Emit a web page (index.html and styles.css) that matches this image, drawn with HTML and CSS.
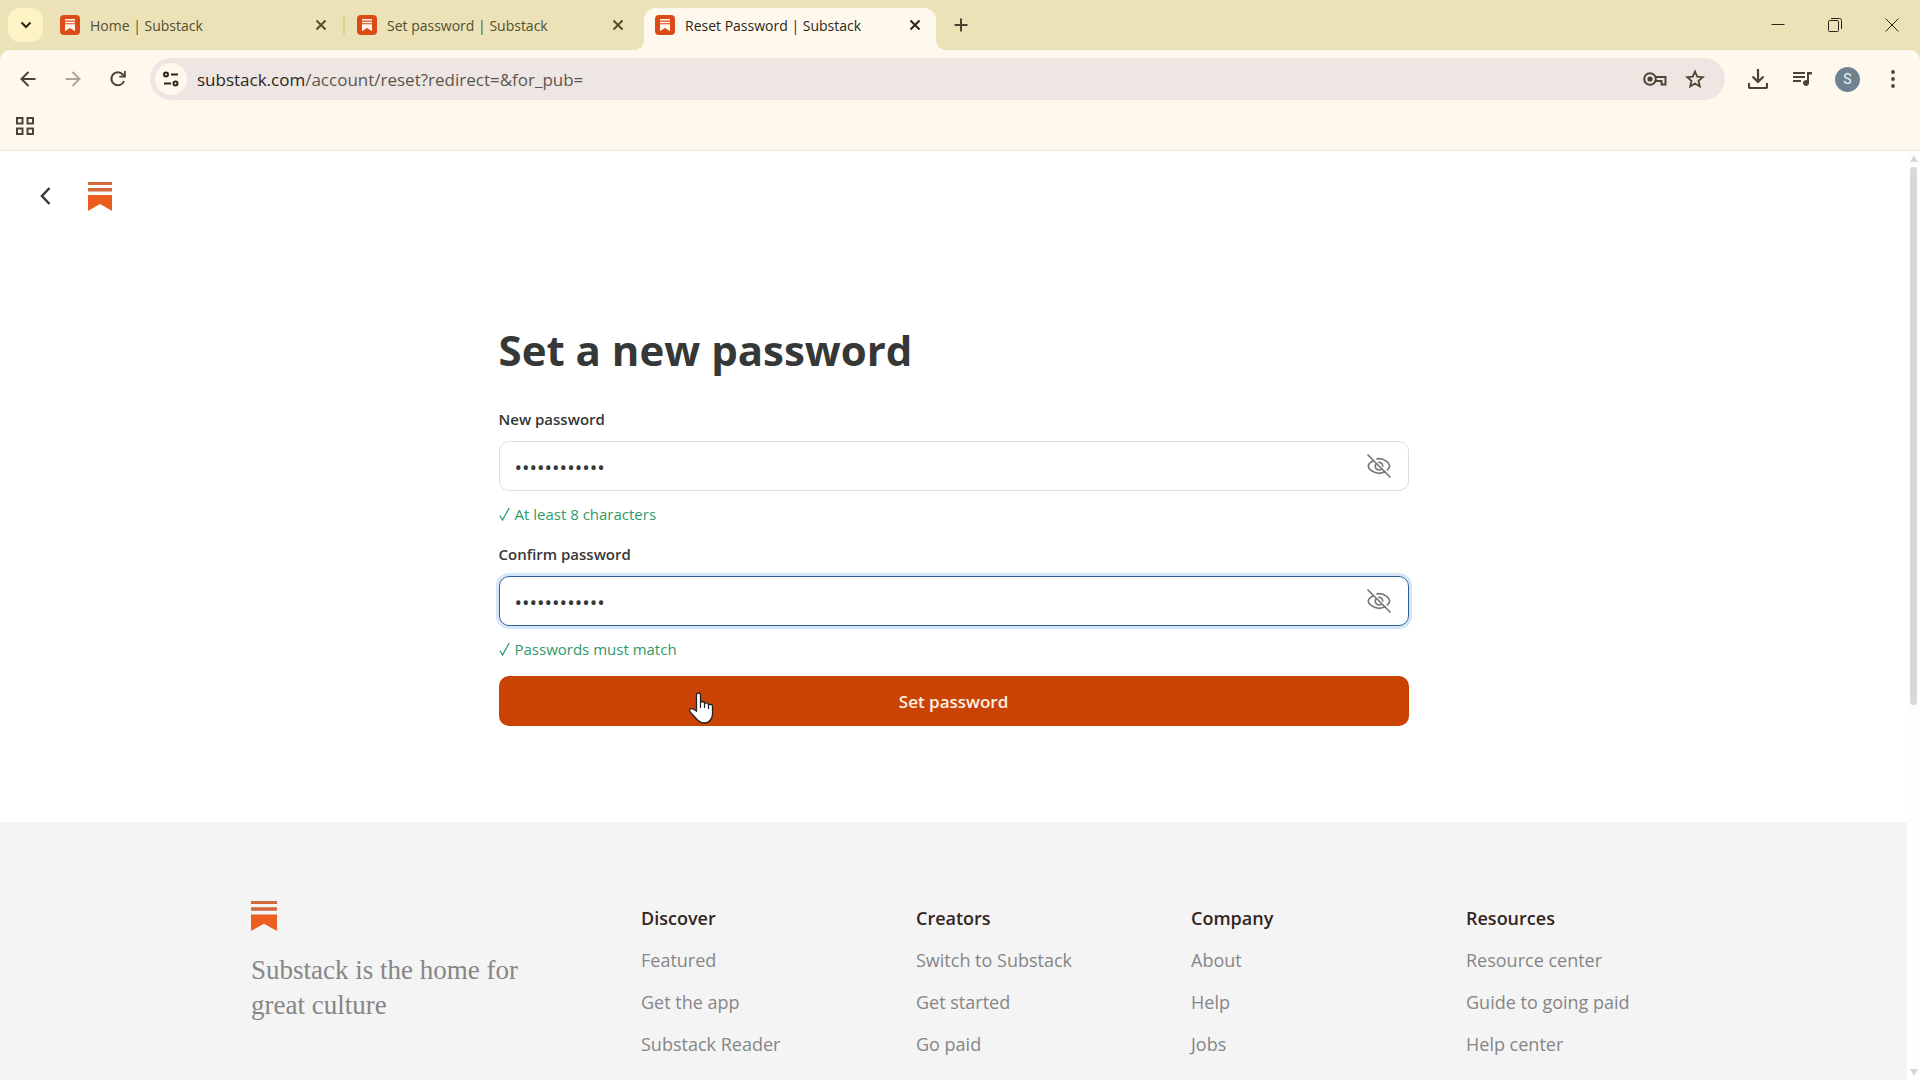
FILE: index.html
```html
<!DOCTYPE html>
<html lang="en">
<head>
    <meta charset="UTF-8">
    <meta name="viewport" content="width=device-width, initial-scale=1.0">
    <title>Reset Password | Substack</title>
    <link rel="stylesheet" href="styles.css">
</head>
<body>

<!-- shared icon shapes -->
<svg class="sprite" aria-hidden="true">
    <symbol id="favicon" viewBox="0 0 20 20">
        <rect width="20" height="20" rx="4" fill="#db4a17"/>
        <path d="M5 4h10v1.500H5zM5 6.700h10v1.500H5zM5 9.300h10v7l-5-3.200-5 3.200z" fill="#fff3ea"/>
    </symbol>
    <symbol id="close" viewBox="0 0 12 12">
        <path d="M1.500 1.500l9 9M10.500 1.500l-9 9" fill="none" stroke="currentColor" stroke-width="2"/>
    </symbol>
    <symbol id="logo" viewBox="0 0 24 29" preserveAspectRatio="none">
        <path d="M0 0h24v3H0zM0 6h24v3.500H0z" fill="#d2693b"/>
        <path d="M0 13h24v16l-12-7-12 7z" fill="#ec5d20"/>
    </symbol>
    <symbol id="eye-off" viewBox="0 0 24 24">
        <path d="M6.200 6.800C3.300 8.400 1.300 10.700 1.300 12c0 2.700 4.800 7.300 10.700 7.300 2.400 0 4.500-.7 6.200-1.700M10 4.900c.7-.1 1.300-.2 2-.2 5.900 0 10.700 4.600 10.700 7.300 0 1-.9 2.500-2.300 3.900M9.300 9.700a3.700 3.700 0 1 0 5.300 5.200M12 8.300a3.700 3.700 0 0 1 3.700 3.700M1 1l22 22" fill="none" stroke="currentColor" stroke-width="1.700" stroke-linecap="round"/>
    </symbol>
</svg>

<header class="browser">
    <div class="tab-bar">
        <button class="tab-search" aria-label="Search tabs">
            <svg width="12" height="8" viewBox="0 0 12 8"><path d="M1.500 1.500L6 6l4.500-4.500" fill="none" stroke="currentColor" stroke-width="2"/></svg>
        </button>
        <div class="tab">
            <svg width="20" height="20"><use href="#favicon"/></svg>
            <span>Home | Substack</span>
            <button class="tab-close" aria-label="Close tab"><svg width="12" height="12"><use href="#close"/></svg></button>
        </div>
        <div class="tab divided">
            <svg width="20" height="20"><use href="#favicon"/></svg>
            <span>Set password | Substack</span>
            <button class="tab-close" aria-label="Close tab"><svg width="12" height="12"><use href="#close"/></svg></button>
        </div>
        <div class="tab active">
            <svg width="20" height="20"><use href="#favicon"/></svg>
            <span>Reset Password | Substack</span>
            <button class="tab-close" aria-label="Close tab"><svg width="12" height="12"><use href="#close"/></svg></button>
        </div>
        <button class="new-tab" aria-label="New tab">
            <svg width="14" height="14" viewBox="0 0 14 14"><path d="M7 .5v13M.5 7h13" fill="none" stroke="currentColor" stroke-width="2"/></svg>
        </button>
        <div class="window-controls">
            <button aria-label="Minimize"><svg width="14" height="14" viewBox="0 0 14 14"><path d="M.5 6.500h13" stroke="currentColor"/></svg></button>
            <button aria-label="Restore"><svg width="14" height="14" viewBox="0 0 14 14"><path d="M.5 3.500q0-1 1-1h8q1 0 1 1v9q0 1-1 1h-8q-1 0-1-1zM3 .5h8.500q2 0 2 2V11" fill="none" stroke="currentColor"/></svg></button>
            <button aria-label="Close"><svg width="14" height="14" viewBox="0 0 14 14"><path d="M.5 .5l13 13M13.500 .5l-13 13" stroke="currentColor"/></svg></button>
        </div>
    </div>

    <div class="toolbar">
        <div class="nav-buttons">
            <button aria-label="Back"><svg width="16" height="16" viewBox="0 0 16 16"><path d="M15.500 8H2M8.500 1L1.500 8l7 7" fill="none" stroke="currentColor" stroke-width="2"/></svg></button>
            <button class="off" aria-label="Forward"><svg width="16" height="16" viewBox="0 0 16 16"><path d="M.5 8H14M7.500 1l7 7-7 7" fill="none" stroke="currentColor" stroke-width="2"/></svg></button>
            <button aria-label="Reload"><svg width="18" height="18" viewBox="0 0 18 18"><path d="M15 11a6.500 6.500 0 1 1-1.200-6.500L16 6.500" fill="none" stroke="currentColor" stroke-width="2"/><path d="M16.800 1v6.500h-6.500V5.700H15V1z" fill="currentColor"/></svg></button>
        </div>
        <div class="address-bar">
            <button class="site-info" aria-label="Site information">
                <svg width="16" height="16" viewBox="0 0 16 16"><path d="M8 3.500h7M1 12.500h7" stroke="currentColor" stroke-width="2"/><circle cx="3" cy="3.500" r="2" fill="none" stroke="currentColor" stroke-width="2"/><circle cx="12.500" cy="12.500" r="2" fill="none" stroke="currentColor" stroke-width="2"/></svg>
            </button>
            <p class="url">substack.com<span>/account/reset?redirect=&amp;for_pub=</span></p>
            <button aria-label="Passwords"><svg width="24" height="14" viewBox="0 0 24 14"><circle cx="7" cy="7" r="5.800" fill="none" stroke="currentColor" stroke-width="2"/><circle cx="7" cy="7" r="2.600" fill="currentColor"/><path d="M12.500 5H22.500v7.500h-4V9h-6" fill="none" stroke="currentColor" stroke-width="2"/></svg></button>
            <button aria-label="Bookmark this tab"><svg width="20" height="20" viewBox="0 0 20 20"><path d="M10 2.500l2.200 5.200 5.600.5-4.300 3.700 1.300 5.500-4.800-2.900-4.800 2.900 1.300-5.500-4.300-3.700 5.600-.5z" fill="none" stroke="currentColor" stroke-width="1.800"/></svg></button>
        </div>
        <div class="tool-buttons">
            <button aria-label="Downloads"><svg width="20" height="20" viewBox="0 0 20 20"><path d="M10 0v12.500M4.500 7.500L10 13l5.500-5.500M1 14v3.500q0 1.500 1.500 1.500h15q1.500 0 1.500-1.500V14" fill="none" stroke="currentColor" stroke-width="2.200"/></svg></button>
            <button aria-label="Media controls"><svg width="20" height="16" viewBox="0 0 20 16"><path d="M0 2h12M0 6h12M0 10h8" stroke="currentColor" stroke-width="2"/><path d="M14 1h5v2.500h-3V12a3 3 0 1 1-2-2.800z" fill="currentColor"/></svg></button>
            <button class="avatar" aria-label="Profile">S</button>
            <button aria-label="Menu"><svg width="4" height="18" viewBox="0 0 4 18"><circle cx="2" cy="2" r="1.900"/><circle cx="2" cy="9" r="1.900"/><circle cx="2" cy="16" r="1.900"/></svg></button>
        </div>
    </div>

    <div class="bookmarks">
        <button aria-label="Apps"><svg width="18" height="18" viewBox="0 0 18 18"><path d="M1 1h5.500v5.500H1zM11.500 1H17v5.500h-5.500zM1 11.500h5.500V17H1zM11.500 11.500H17V17h-5.500z" fill="none" stroke="currentColor" stroke-width="2"/></svg></button>
    </div>
</header>

<div class="viewport">
    <div class="page">
        <nav class="page-nav">
            <button aria-label="Go back"><svg width="12" height="18" viewBox="0 0 12 18"><path d="M9.500 1L2 9l7.500 8" fill="none" stroke="currentColor" stroke-width="2.500"/></svg></button>
            <a href="#" aria-label="Substack home"><svg width="24" height="29"><use href="#logo"/></svg></a>
        </nav>

        <main>
            <form class="reset-form">
                <h1>Set a new password</h1>

                <div class="field">
                    <label for="password">New password</label>
                    <div class="input-box">
                        <input type="password" id="password" value="substack1234">
                        <button type="button" aria-label="Show password"><svg width="24" height="24"><use href="#eye-off"/></svg></button>
                    </div>
                    <p class="hint"><svg width="11" height="14" viewBox="0 0 11 14"><path d="M.8 8.500L3.500 13 10.200 1" fill="none" stroke="currentColor" stroke-width="1.300"/></svg>At least 8 characters</p>
                </div>

                <div class="field">
                    <label for="confirm">Confirm password</label>
                    <div class="input-box focused">
                        <input type="password" id="confirm" value="substack1234">
                        <button type="button" aria-label="Show password"><svg width="24" height="24"><use href="#eye-off"/></svg></button>
                    </div>
                    <p class="hint"><svg width="11" height="14" viewBox="0 0 11 14"><path d="M.8 8.500L3.500 13 10.200 1" fill="none" stroke="currentColor" stroke-width="1.300"/></svg>Passwords must match</p>
                </div>

                <div class="submit-row">
                    <button type="submit" class="submit">Set password</button>
                    <svg class="pointer" width="26" height="32" viewBox="0 0 26 32"><path d="M8.500 19V3q0-2 2-2t2 2v8q.3-1.500 2-1.500T16.500 11v1q.3-1.200 2-1.200t2 1.700v.8q.3-1 2-1t2 1.900V22q0 4-2.500 6.500-2 2.500-5.500 2.500-4 0-7-3l-6-6.500q-3-3.500-1.500-4.500t4 .5z" fill="#fff" stroke="#222" stroke-width="1.300"/><path d="M12.500 11v5M16.500 12v4M20.500 13v4" stroke="#222" stroke-width="1.200"/></svg>
                </div>
            </form>
        </main>

        <footer>
            <div class="footer-grid">
                <div class="brand">
                    <svg width="26" height="30"><use href="#logo"/></svg>
                    <p>Substack is the home for great culture</p>
                </div>
                <div class="links">
                    <h2>Discover</h2>
                    <a href="#">Featured</a>
                    <a href="#">Get the app</a>
                    <a href="#">Substack Reader</a>
                </div>
                <div class="links">
                    <h2>Creators</h2>
                    <a href="#">Switch to Substack</a>
                    <a href="#">Get started</a>
                    <a href="#">Go paid</a>
                </div>
                <div class="links">
                    <h2>Company</h2>
                    <a href="#">About</a>
                    <a href="#">Help</a>
                    <a href="#">Jobs</a>
                </div>
                <div class="links">
                    <h2>Resources</h2>
                    <a href="#">Resource center</a>
                    <a href="#">Guide to going paid</a>
                    <a href="#">Help center</a>
                </div>
            </div>
        </footer>
    </div>

    <div class="scrollbar">
        <svg width="8" height="7" viewBox="0 0 8 7"><path d="M4 0l4 7H0z" fill="#d6d6d6"/></svg>
        <div class="track"><div class="thumb"></div></div>
        <svg width="8" height="7" viewBox="0 0 8 7"><path d="M4 7L0 0h8z" fill="#d6d6d6"/></svg>
    </div>
</div>

</body>
</html>
```
FILE: styles.css
```css
* {
    box-sizing: border-box;
}
body {
    margin: 0;
    height: 100vh;
    display: flex;
    flex-direction: column;
    overflow: hidden;
    font-family: "Open Sans", "Noto Sans", sans-serif;
    color: #363737;
    background: #fff;
}
h1, h2, p {
    margin: 0;
}
button {
    display: flex;
    align-items: center;
    justify-content: center;
    padding: 0;
    border: none;
    background: none;
    color: inherit;
    font-family: inherit;
    cursor: pointer;
}
svg {
    display: block;
    flex-shrink: 0;
}
.sprite {
    position: absolute;
    width: 0;
    height: 0;
}

/* browser chrome */
.browser {
    background: #ebe2b8;
    color: #4a4532;
}
.tab-bar {
    display: flex;
    height: 50px;
    padding: 8px 0 0 8px;
}
.tab-search {
    width: 35px;
    height: 34px;
    margin-right: 7px;
    border-radius: 12px;
    background: #fdf3c4;
    color: #2b2614;
}
.tab {
    display: flex;
    align-items: center;
    gap: 10px;
    width: 297px;
    height: 34px;
    padding: 0 16px 0 10px;
    font-size: 14px;
    color: #544e30;
}
.tab span {
    flex: 1;
}
.tab-close {
    width: 20px;
    height: 20px;
}
.divided {
    position: relative;
}
.divided::before {
    content: "";
    position: absolute;
    left: -4px;
    top: 8px;
    width: 2px;
    height: 18px;
    background: #dcd284;
}
.active {
    position: relative;
    width: 292px;
    height: 42px;
    padding: 0 11px 8px 11px;
    border-radius: 12px 12px 0 0;
    background: #fff8ec;
    color: #2a2618;
}
.active::before, .active::after {
    content: "";
    position: absolute;
    bottom: 0;
    width: 10px;
    height: 10px;
}
.active::before {
    right: 100%;
    background: radial-gradient(circle at top left, transparent 10px, #fff8ec 10px);
}
.active::after {
    left: 100%;
    background: radial-gradient(circle at top right, transparent 10px, #fff8ec 10px);
}
.new-tab {
    width: 34px;
    height: 34px;
    margin-left: 8px;
}
.window-controls {
    display: flex;
    margin-left: auto;
    color: #2a2618;
}
.window-controls button {
    width: 57px;
    height: 34px;
}
.toolbar {
    display: flex;
    align-items: center;
    height: 58px;
    padding: 0 15px 0 5px;
    border-radius: 10px 10px 0 0;
    background: #fff8ec;
}
.nav-buttons {
    display: flex;
    margin-right: 10px;
}
.nav-buttons button {
    width: 45px;
    height: 34px;
}
.off {
    opacity: 0.45;
}
.address-bar {
    flex: 1;
    display: flex;
    align-items: center;
    height: 42px;
    padding: 0 10px 0 5px;
    border-radius: 21px;
    background: #eee6e3;
}
.address-bar button {
    width: 40px;
    height: 32px;
}
.address-bar .site-info {
    width: 32px;
    border-radius: 50%;
    background: #fff8ec;
    color: #2a2618;
}
.url {
    flex: 1;
    padding-left: 10px;
    font-size: 17px;
    color: #2a2522;
}
.url span {
    color: #5c5650;
}
.tool-buttons {
    display: flex;
    align-items: center;
    gap: 20px;
    margin-left: 20px;
    fill: currentColor;
}
.tool-buttons button {
    width: 25px;
    height: 25px;
}
.tool-buttons .avatar {
    border-radius: 50%;
    background: #70828f;
    color: #eef4f8;
    font: 14px Roboto, sans-serif;
}
.bookmarks {
    height: 43px;
    padding: 9px 16px;
    border-bottom: 1px solid #ece5da;
    background: #fff8ec;
}

/* page */
.viewport {
    flex: 1;
    display: flex;
    min-height: 0;
}
.page {
    flex: 1;
    overflow: hidden;
    background: #f4f4f4;
}
.page-nav {
    display: flex;
    align-items: center;
    gap: 24px;
    height: 90px;
    padding: 0 28px;
    background: #fff;
}
.page-nav button {
    width: 36px;
    height: 36px;
}
main {
    padding: 79px 20px 96px;
    background: #fff;
}
.reset-form {
    max-width: 910px;
    margin: 0 auto;
}
h1 {
    margin-bottom: 29px;
    font-size: 42px;
    line-height: 60px;
    font-weight: 700;
}
.field label {
    display: block;
    margin-bottom: 12px;
    font-size: 15px;
    line-height: 20px;
    font-weight: 600;
}
.input-box {
    display: flex;
    align-items: center;
    height: 50px;
    padding: 0 17px 0 15px;
    border: 1px solid #dedede;
    border-radius: 10px;
}
.focused {
    border-color: #2f5f96;
    box-shadow: 0 0 0 3px #d5e6f8;
}
.input-box input {
    flex: 1;
    padding: 2px 0 0;
    border: none;
    outline: none;
    background: none;
    font-family: inherit;
    font-size: 20px;
    color: #363737;
}
.input-box button {
    color: #777;
}
.hint {
    display: flex;
    align-items: center;
    gap: 5px;
    padding: 11px 0 18px;
    font-size: 15px;
    line-height: 24px;
    color: #2f9a68;
}
.field:nth-last-child(2) .hint {
    padding-bottom: 15px;
}
.submit-row {
    position: relative;
}
.submit {
    width: 100%;
    height: 50px;
    border-radius: 10px;
    background: #c94304;
    color: #fff0e4;
    font-size: 17px;
    font-weight: 600;
}
.pointer {
    position: absolute;
    left: 189px;
    top: 16px;
}
footer {
    padding: 79px 20px 20px;
}
.footer-grid {
    display: grid;
    grid-template-columns: 305px repeat(4, 1fr);
    gap: 85px;
    max-width: 1405px;
    margin: 0 auto;
}
.brand p {
    margin-top: 22px;
    font-family: "Liberation Serif", serif;
    font-size: 27px;
    line-height: 35px;
    color: #868686;
}
.links h2 {
    font-size: 18px;
    line-height: 34px;
    font-weight: 600;
    margin-bottom: 4px;
    color: #33261f;
}
.links a {
    display: block;
    font-size: 18px;
    line-height: 42px;
    white-space: nowrap;
    text-decoration: none;
    color: #868686;
}
.scrollbar {
    display: flex;
    flex-direction: column;
    align-items: center;
    gap: 5px;
    width: 13px;
    padding: 4px 0;
    background: #fefefe;
}
.track {
    flex: 1;
}
.thumb {
    width: 7px;
    height: 60%;
    border-radius: 3px;
    background: #d9d9d9;
}
```
